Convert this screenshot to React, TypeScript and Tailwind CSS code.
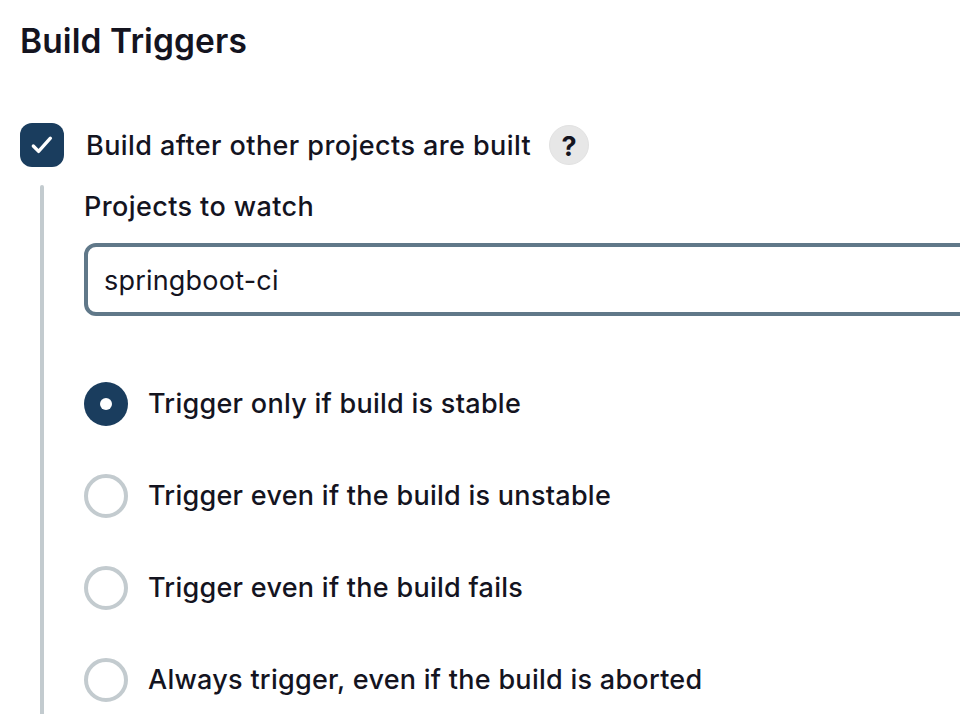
const font = "font-['Inter','Liberation_Sans',sans-serif]";

const options = [
  { label: "Trigger only if build is stable", checked: true },
  { label: "Trigger even if the build is unstable", checked: false },
  { label: "Trigger even if the build fails", checked: false },
  { label: "Always trigger, even if the build is aborted", checked: false },
];

function Radio({ checked }: { checked: boolean }) {
  return checked ? (
    <span className="flex size-11 shrink-0 items-center justify-center rounded-full bg-[#1a3d5e]">
      <span className="size-3 rounded-full bg-white" />
    </span>
  ) : (
    <span className="size-11 shrink-0 rounded-full border-4 border-[#c3cbcf] bg-white" />
  );
}

export default function App() {
  return (
    <main className={`h-[714px] w-[960px] overflow-hidden bg-white pl-5 text-[#14141f] ${font}`}>
      <h1 className="h-[123px] pt-[19px] text-[33.5px] leading-[44px] font-semibold whitespace-nowrap tracking-[0.1px]">Build Triggers</h1>
      <div className="flex h-11 items-center">
        <span className="flex size-11 items-center justify-center rounded-[12px] bg-[#1a3d5e]">
          <svg width="44" height="44" viewBox="0 0 44 44" fill="none">
            <path d="M13.3 23L18.6 28.4L30.4 15.2" stroke="white" strokeWidth="3.3" strokeLinecap="round" strokeLinejoin="round" />
          </svg>
        </span>
        <span className="ml-[22px] w-[445px] pt-px text-[27px] leading-10 font-medium whitespace-nowrap tracking-[0.42px]">Build after other projects are built</span>
        <span className="ml-[18px] flex size-10 items-center justify-center rounded-full border border-[#e2e2e2] bg-[#e7e7e7] pt-[2px] text-[27px] leading-none font-bold">?</span>
      </div>
      <section className="mt-[18px] flex h-[529px] w-[940px] pl-5">
        <div className="w-1 shrink-0 rounded-t-[2px] bg-[#c3cbcf]" />
        <div className="ml-10 shrink-0">
          <div className="h-[58px] pt-[2px] text-[27px] leading-10 font-medium whitespace-nowrap tracking-[0.4px]">Projects to watch</div>
          <div className="flex h-[73px] w-[900px] items-center rounded-[12px] border-4 border-[#607889] pt-[3px] pl-4 text-[27px] tracking-[0.2px]">springboot-ci</div>
          <div className="mt-[66px] flex flex-col gap-12">
            {options.map((o) => (
              <div key={o.label} className="flex h-11 items-center gap-5">
                <Radio checked={o.checked} />
                <span className="text-[27px] leading-10 font-medium whitespace-nowrap tracking-[0.27px]">{o.label}</span>
              </div>
            ))}
          </div>
        </div>
      </section>
    </main>
  );
}
